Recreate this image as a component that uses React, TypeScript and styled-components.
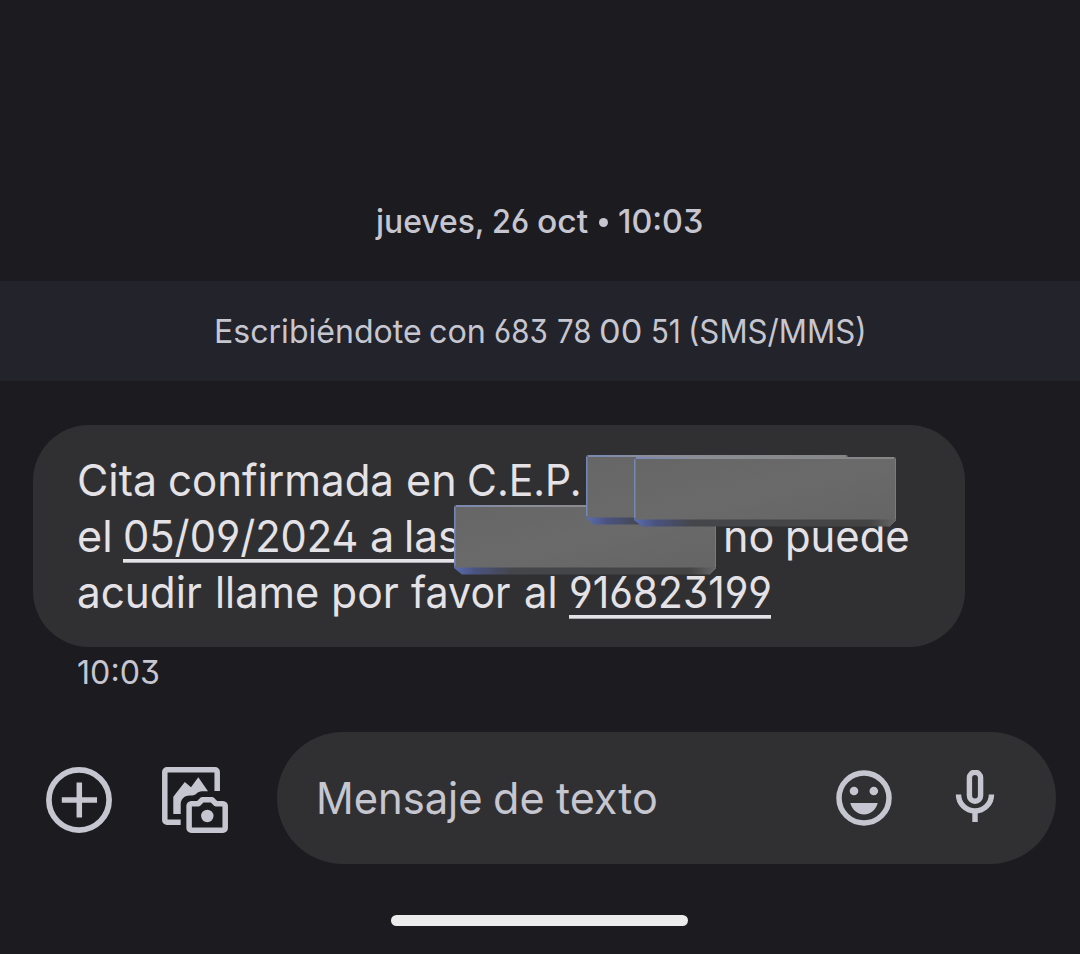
import React from 'react';
import styled, { createGlobalStyle } from 'styled-components';

const colors = {
  page: '#1c1b20',
  band: '#22232b',
  surface: '#303032',
  text: '#e4e2e6',
  muted: '#c6c6d0',
};

const GlobalStyle = createGlobalStyle`
  * { box-sizing: border-box; }
  html, body { margin: 0; background: ${colors.page}; }
  body {
    font-family: Inter, Roboto, "Liberation Sans", sans-serif;
    font-feature-settings: "ss01";
    color: ${colors.muted};
  }
`;

const Screen = styled.main`
  width: 1080px;
  height: 954px;
  overflow: hidden;
  display: flex;
  flex-direction: column;
  background: ${colors.page};
`;

const Line = styled.div<{ $height: number; $size: number; $weight?: number }>`
  display: flex;
  white-space: pre;
  height: ${(p) => p.$height}px;
  line-height: ${(p) => p.$height}px;
  font-size: ${(p) => p.$size}px;
  font-weight: ${(p) => p.$weight ?? 400};
`;

const Slot = styled.span<{ $slot: number }>`
  flex: none;
  width: ${(p) => p.$slot}px;
`;

const Glyphs = styled.span<{ $stretch: number }>`
  display: inline-block;
  transform: scaleX(${(p) => p.$stretch});
  transform-origin: left center;
`;

/* One word: `slot` is its advance including the following space. */
function Word({ slot, stretch = 1, children }: { slot: number; stretch?: number; children: string }) {
  return (
    <Slot $slot={slot}>
      <Glyphs $stretch={stretch}>{children}</Glyphs>
    </Slot>
  );
}

const DateRow = styled.header`
  padding: 201px 0 0 376px;
  height: 281px;
`;

const Bullet = styled.span`
  width: 9px;
  height: 9px;
  border-radius: 50%;
  background: ${colors.muted};
  margin: 17px 10px 0 3.5px;
`;

const Band = styled.section`
  height: 100px;
  padding-left: 213.6px;
  background: ${colors.band};
`;

const Bubble = styled.article`
  position: relative;
  width: 932px;
  height: 222px;
  margin: 44px 0 0 33px;
  padding: 27px 0 27px 44px;
  border-radius: 56px;
  background: ${colors.surface};
  color: ${colors.text};
`;

const Link = styled.span<{ $tail?: number }>`
  display: flex;
  margin-right: ${(p) => p.$tail ?? 0}px;
  background: linear-gradient(${colors.text}, ${colors.text}) 0 51px / 100% 3.7px no-repeat;
`;

const PlateBox = styled.svg<{ $x: number; $y: number }>`
  position: absolute;
  left: ${(p) => p.$x}px;
  top: ${(p) => p.$y}px;
`;

const SentAt = styled.footer`
  padding: 5px 0 0 76.8px;
  height: 85px;
`;

const Composer = styled.section`
  display: flex;
  height: 132px;
  padding-left: 46px;
`;

const Action = styled.div<{ $gap: number }>`
  margin: 35px ${(p) => p.$gap}px 0 0;
  width: 66px;
  height: 66px;
`;

const Field = styled.div`
  display: flex;
  width: 779px;
  height: 132px;
  padding-left: 39px;
  border-radius: 66px;
  background: ${colors.surface};
`;

const FieldIcon = styled.div<{ $gap: number }>`
  height: 56px;
  margin: 38px 0 0 ${(p) => p.$gap}px;
`;

const HomeBar = styled.div`
  width: 297px;
  height: 11px;
  margin: 51.4px 0 0 391px;
  border-radius: 6px;
  background: #ececec;
`;

function Plate({ id, x, y }: { id: string; x: number; y: number }) {
  return (
    <PlateBox $x={x} $y={y} width="263" height="71" viewBox="0 0 263 71">
      <defs>
        <linearGradient id={`${id}-face`} x1="0" y1="0" x2="1" y2="1">
          <stop offset="0" stopColor="#666667" />
          <stop offset=".5" stopColor="#6a6a6b" />
          <stop offset="1" stopColor="#656566" />
        </linearGradient>
        <linearGradient id={`${id}-bevel`}>
          <stop offset="0" stopColor="#5b6db0" />
          <stop offset=".08" stopColor="#4a5380" />
          <stop offset=".22" stopColor="#45464b" />
          <stop offset=".9" stopColor="#444444" />
          <stop offset="1" stopColor="#666666" />
        </linearGradient>
        <linearGradient id={`${id}-top`}>
          <stop offset="0" stopColor="#7f91c8" />
          <stop offset=".25" stopColor="#9597a1" />
          <stop offset="1" stopColor="#8c8c8c" />
        </linearGradient>
      </defs>
      <path d="M0 61H262V63L255 69.500H8L0 63Z" fill={`url(#${id}-bevel)`} />
      <rect width="262" height="62.500" rx="2" fill={`url(#${id}-face)`} />
      <rect x="2" y=".2" width="258" height="1.600" fill={`url(#${id}-top)`} />
      <path d="M.8 2V61" stroke="#7587ba" strokeWidth="1.500" />
      <path d="M261.500 2V62" stroke="#7b7b7c" strokeWidth="1" />
      <path d="M255 69.500L262 63" stroke="#707070" strokeWidth="1" />
    </PlateBox>
  );
}

const AddIcon = () => (
  <svg width="66" height="66" viewBox="0 0 66 66" fill="none" stroke={colors.muted}>
    <circle cx="33" cy="33" r="30.1" strokeWidth="5.7" />
    <path d="M33.300 15.500V50.500M15.800 33H51" strokeWidth="5.500" />
  </svg>
);

const GalleryIcon = () => (
  <svg width="66" height="66" viewBox="0 0 66 66" fill="none" stroke={colors.muted}>
    <path d="M18.700 55.200H5A2.200 2.200 0 0 1 2.800 53V5A2.200 2.200 0 0 1 5 2.800H53A2.200 2.200 0 0 1 55.200 5V24" strokeWidth="5.500" />
    <path
      d="M11.300 47V29.700L22.800 15L29 20.200L36.300 10.200L46 24.200H40C35 24.200 34.500 28.400 30 28.500H27.500C22 28.500 18.700 32.500 18.700 37.500V47Z"
      fill={colors.muted}
      stroke="none"
    />
    <path
      d="M29.500 36.700H36.300L40.300 32.700H50L54 36.700H61A2.200 2.200 0 0 1 63.200 39V61A2.200 2.200 0 0 1 61 63.200H29.300A2.200 2.200 0 0 1 27.100 61V39A2.200 2.200 0 0 1 29.300 36.700Z"
      strokeWidth="5.500"
      strokeLinejoin="round"
    />
    <circle cx="45.300" cy="49" r="6.200" fill={colors.muted} stroke="none" />
  </svg>
);

const EmojiIcon = () => (
  <svg width="56" height="56" viewBox="0 0 56 56" fill={colors.muted}>
    <circle cx="28" cy="28" r="25" fill="none" stroke={colors.muted} strokeWidth="5.500" />
    <circle cx="18" cy="21" r="4.300" />
    <circle cx="37.800" cy="21" r="4.300" />
    <path d="M14.300 33H41.700C39.600 40.500 34 44.500 28 44.500S16.400 40.500 14.300 33Z" />
  </svg>
);

const MicIcon = () => (
  <svg width="40" height="56" viewBox="0 0 40 56" fill="none" stroke={colors.muted} strokeWidth="5.400">
    <rect x="14.400" y="2.200" width="11.200" height="29" rx="5.600" />
    <path d="M3.500 24.500A16.500 16.500 0 0 0 36.500 24.500M20 40V52" />
  </svg>
);

export default function App() {
  return (
    <Screen>
      <GlobalStyle />
      <DateRow>
        <Line $height={40} $size={33} $weight={500}>
          <Word slot={115.7} stretch={0.965}>jueves,</Word>
          <Word slot={45} stretch={0.93}>26</Word>
          <Word slot={59.3} stretch={1.02}>oct</Word>
          <Bullet />
          <Word slot={90} stretch={0.98}>10:03</Word>
        </Line>
      </DateRow>
      <Band>
        <Line $height={100} $size={33}>
          <Word slot={215.8} stretch={0.972}>Escribiéndote</Word>
          <Word slot={64.3} stretch={0.98}>con</Word>
          <Word slot={63.5} stretch={0.895}>683</Word>
          <Word slot={41.6} stretch={0.89}>78</Word>
          <Word slot={52} stretch={1.04}>00</Word>
          <Word slot={37} stretch={0.89}>51</Word>
          <Word slot={180} stretch={0.945}>(SMS/MMS)</Word>
        </Line>
      </Band>
      <Bubble>
        <Line $height={56} $size={44}>
          <Word slot={91} stretch={0.975}>Cita</Word>
          <Word slot={237.7} stretch={0.955}>confirmada</Word>
          <Word slot={61} stretch={0.98}>en</Word>
          <Word slot={118} stretch={0.93}>C.E.P.</Word>
        </Line>
        <Line $height={56} $size={44}>
          <Word slot={46} stretch={0.98}>el</Word>
          <Link $tail={262}>
            <Word slot={246.7} stretch={0.947}>05/09/2024</Word>
            <Word slot={34.7} stretch={0.98}>a</Word>
            <Word slot={56.6} stretch={0.96}>las</Word>
          </Link>
          <Word slot={62} stretch={0.98}>no</Word>
          <Word slot={128} stretch={0.95}>puede</Word>
        </Line>
        <Line $height={56} $size={44}>
          <Word slot={137.5} stretch={0.96}>acudir</Word>
          <Word slot={116.4} stretch={0.945}>llame</Word>
          <Word slot={80.4} stretch={0.97}>por</Word>
          <Word slot={112.5} stretch={0.935}>favor</Word>
          <Word slot={44.9} stretch={0.95}>al</Word>
          <Link>
            <Word slot={202.3} stretch={0.925}>916823199</Word>
          </Link>
        </Line>
        <Plate id="time" x={420.5} y={80} />
        <Plate id="name" x={552.5} y={29.5} />
        <Plate id="surname" x={600.5} y={32} />
      </Bubble>
      <SentAt>
        <Line $height={40} $size={33}>
          <Word slot={90} stretch={0.975}>10:03</Word>
        </Line>
      </SentAt>
      <Composer>
        <Action $gap={50}><AddIcon /></Action>
        <Action $gap={49}><GalleryIcon /></Action>
        <Field>
          <Line $height={132} $size={44}>
            <Word slot={177} stretch={0.948}>Mensaje</Word>
            <Word slot={62.7} stretch={0.98}>de</Word>
            <Word slot={104} stretch={0.98}>texto</Word>
          </Line>
          <FieldIcon $gap={176.3}><EmojiIcon /></FieldIcon>
          <FieldIcon $gap={63}><MicIcon /></FieldIcon>
        </Field>
      </Composer>
      <HomeBar />
    </Screen>
  );
}
